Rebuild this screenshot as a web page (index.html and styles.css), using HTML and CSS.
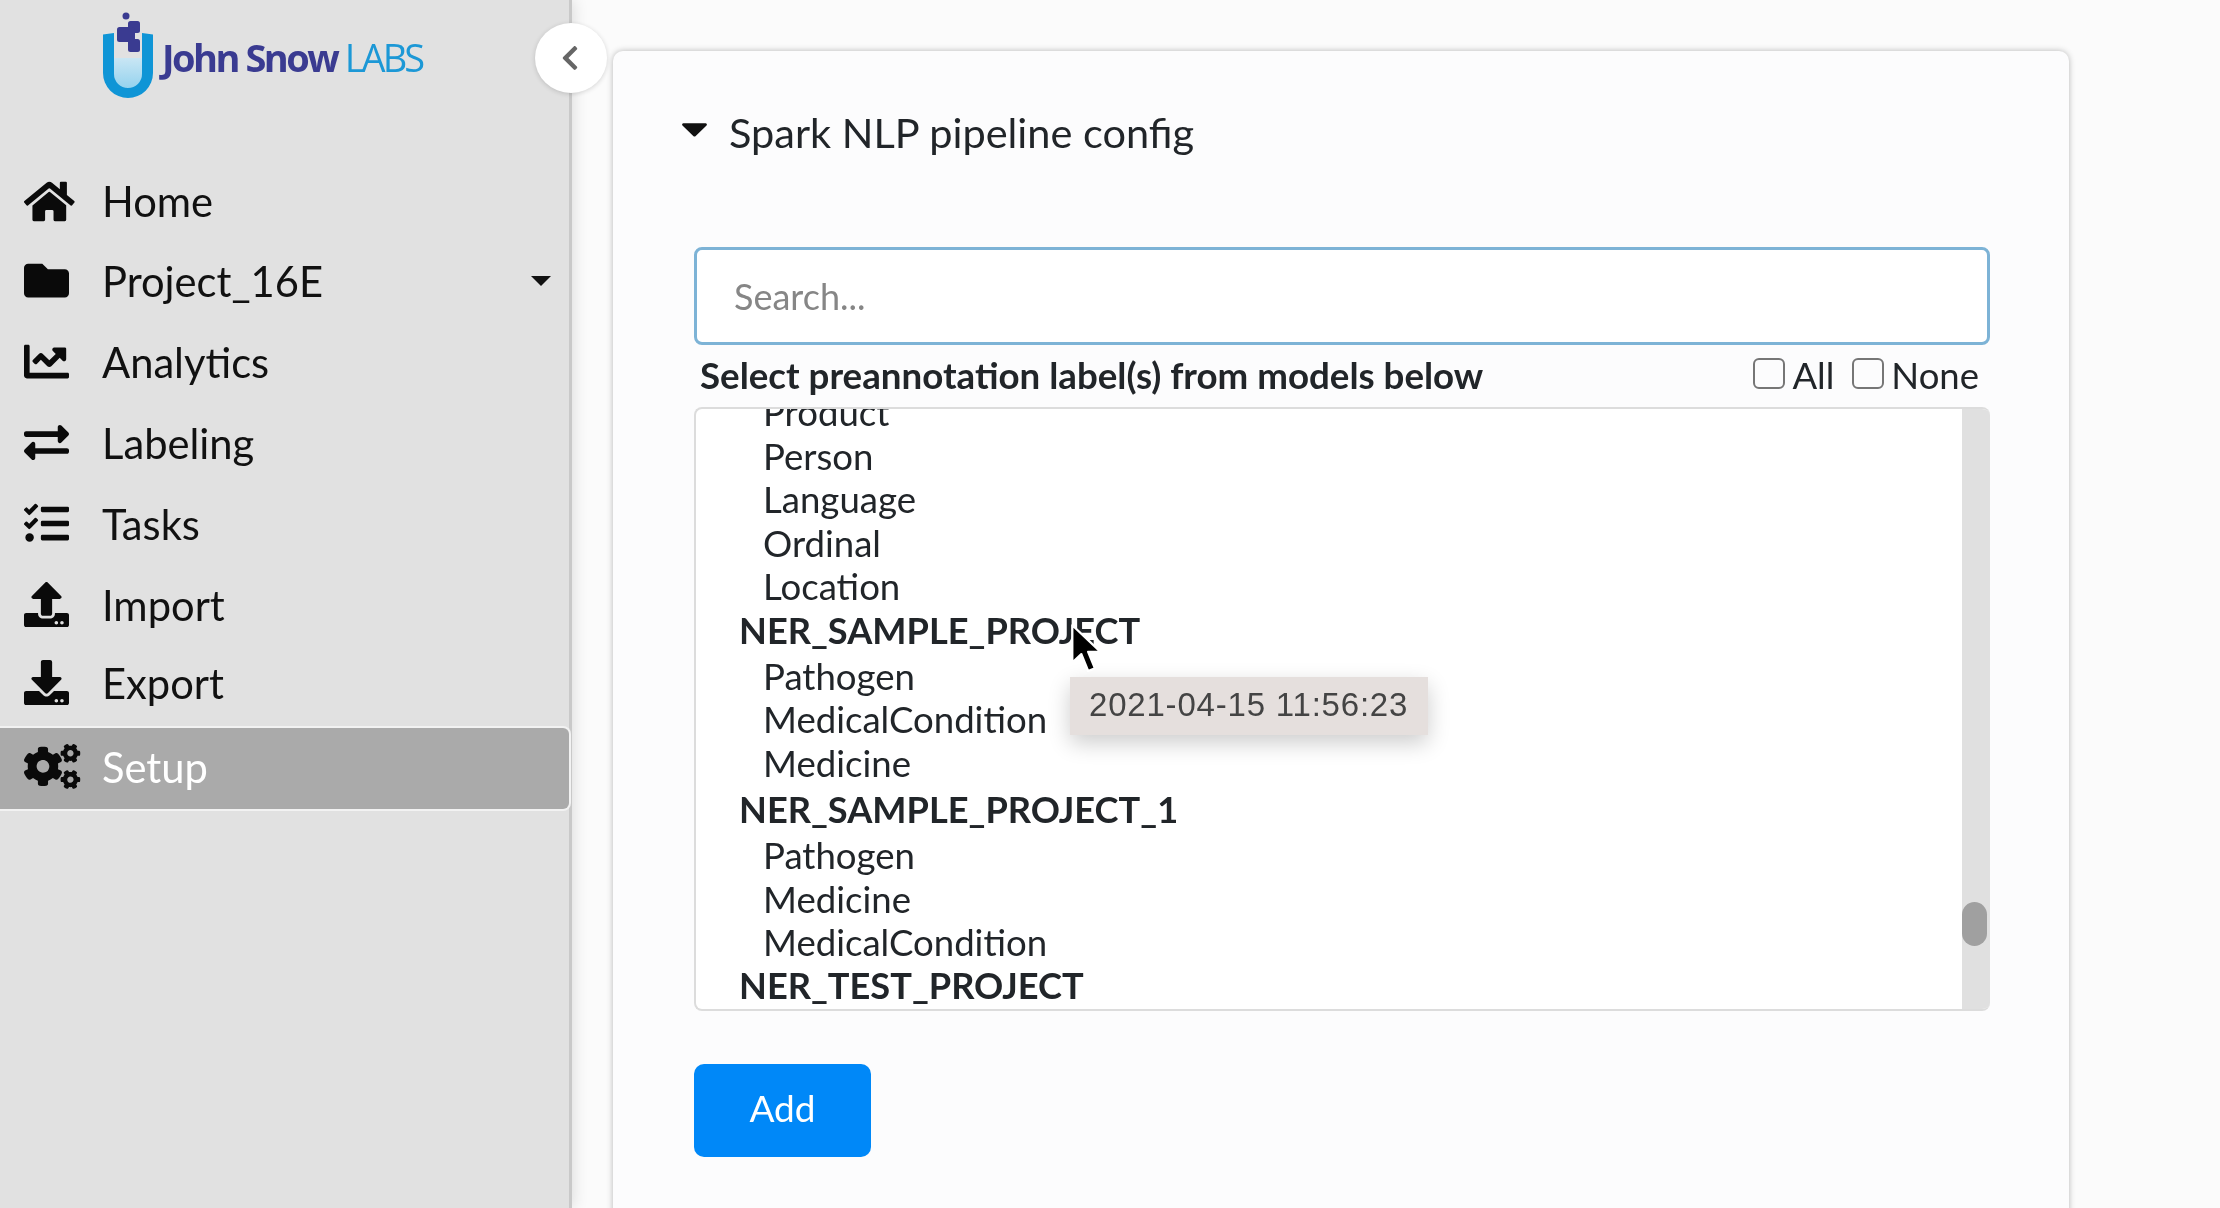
FILE: index.html
```html
<!DOCTYPE html>
<html lang="en">
<head>
<meta charset="utf-8">
<title>Spark NLP pipeline config</title>
<link rel="stylesheet" href="styles.css">
</head>
<body>
<div class="page">
  <aside class="sidebar">
    <div class="logo">
      <svg class="logo-mark" viewBox="0 0 50 86" aria-hidden="true">
        <defs><linearGradient id="liquid" x1="0" y1="0" x2="0" y2="1"><stop offset="0" stop-color="#c9e6f4"/><stop offset="1" stop-color="#93d2ee"/></linearGradient></defs>
        <path d="M11 46h28v17a14 14 0 0 1-28 0z" fill="url(#liquid)"/>
        <path d="M0 22.500l11-1.500v41a14 14 0 0 0 28 0V21l11 1.500V61a25 25 0 0 1-50 0z" fill="#0f95d6"/>
        <circle cx="23" cy="4" r="3.500" fill="#3a3b91"/>
        <rect x="25" y="9" width="12" height="12" rx="2.500" fill="#3a3b91"/>
        <rect x="14" y="15" width="18" height="15" rx="2.500" fill="#3a3b91"/>
        <rect x="25" y="27" width="12" height="13" rx="2.500" fill="#3a3b91"/>
      </svg>
      <span class="logo-text"><b>John Snow</b> <i>LABS</i></span>
    </div>
    <nav class="nav">
      <a class="nav-item nav-item-first"><svg class="icon" viewBox="0 0 576 512" preserveAspectRatio="xMinYMid meet"><path d="M280.37 148.26L96 300.11V464a16 16 0 0 0 16 16l112.06-.29a16 16 0 0 0 15.92-16V368a16 16 0 0 1 16-16h64a16 16 0 0 1 16 16v95.64a16 16 0 0 0 16 16.05L464 480a16 16 0 0 0 16-16V300L295.67 148.26a12.19 12.19 0 0 0-15.3 0zM571.6 251.47L488 182.56V44.05a12 12 0 0 0-12-12h-56a12 12 0 0 0-12 12v72.61L318.47 43a48 48 0 0 0-61 0L4.34 251.47a12 12 0 0 0-1.6 16.9l25.5 31A12 12 0 0 0 45.15 301l235.22-193.74a12.19 12.19 0 0 1 15.3 0L530.9 301a12 12 0 0 0 16.9-1.6l25.5-31a12 12 0 0 0-1.7-16.93z"/></svg><span>Home</span></a>
      <a class="nav-item"><svg class="icon" viewBox="0 0 512 512" preserveAspectRatio="xMinYMid meet"><path d="M464 128H272l-64-64H48C21.49 64 0 85.49 0 112v288c0 26.51 21.49 48 48 48h416c26.51 0 48-21.49 48-48V176c0-26.51-21.49-48-48-48z"/></svg><span>Project_16E</span><svg class="nav-caret" viewBox="0 0 20 10"><path d="M0 0h20L10 10z"/></svg></a>
      <a class="nav-item"><svg class="icon" viewBox="0 0 512 512" preserveAspectRatio="xMinYMid meet"><path d="M496 384H64V80c0-8.840-7.160-16-16-16H16C7.160 64 0 71.160 0 80v336c0 17.670 14.330 32 32 32h464c8.840 0 16-7.160 16-16v-32c0-8.840-7.160-16-16-16zM464 96H345.940c-21.380 0-32.090 25.850-16.970 40.970l32.400 32.400L288 242.750l-73.370-73.370c-12.500-12.500-32.760-12.500-45.250 0l-68.690 68.690c-6.250 6.250-6.250 16.380 0 22.630l22.620 22.620c6.250 6.250 16.380 6.250 22.630 0L192 237.250l73.370 73.370c12.500 12.500 32.760 12.500 45.250 0l96-96 32.400 32.400c15.120 15.120 40.970 4.410 40.970-16.970V112c0-8.840-7.160-16-16-16z"/></svg><span>Analytics</span></a>
      <a class="nav-item"><svg class="icon" viewBox="0 0 512 512" preserveAspectRatio="xMinYMid meet"><path d="M0 168v-16c0-13.255 10.745-24 24-24h360V80c0-21.367 25.899-32.042 40.971-16.971l80 80c9.372 9.373 9.372 24.569 0 33.941l-80 80C409.956 271.982 384 261.456 384 240v-48H24c-13.255 0-24-10.745-24-24zm488 152H128v-48c0-21.314-25.862-32.080-40.971-16.971l-80 80c-9.372 9.373-9.372 24.569 0 33.941l80 80C102.057 463.997 128 453.437 128 432v-48h360c13.255 0 24-10.745 24-24v-16c0-13.255-10.745-24-24-24z"/></svg><span>Labeling</span></a>
      <a class="nav-item"><svg class="icon" viewBox="0 0 512 512" preserveAspectRatio="xMinYMid meet"><path d="M139.610 35.500a12 12 0 0 0-17 0L58.930 98.810l-22.700-22.120a12 12 0 0 0-17 0L3.530 92.410a12 12 0 0 0 0 17l47.590 47.400a12.780 12.780 0 0 0 17.610 0l15.590-15.620L156.520 69a12.090 12.090 0 0 0 .09-17zm0 159.190a12 12 0 0 0-17 0l-63.680 63.720-22.700-22.100a12 12 0 0 0-17 0L3.530 252a12 12 0 0 0 0 17L51 316.500a12.770 12.770 0 0 0 17.600 0l15.700-15.690 72.200-72.220a12 12 0 0 0 .09-16.900zM64 368c-26.490 0-48.590 21.500-48.590 48S37.530 464 64 464a48 48 0 0 0 0-96zm432 16H208a16 16 0 0 0-16 16v32a16 16 0 0 0 16 16h288a16 16 0 0 0 16-16v-32a16 16 0 0 0-16-16zm0-320H208a16 16 0 0 0-16 16v32a16 16 0 0 0 16 16h288a16 16 0 0 0 16-16V80a16 16 0 0 0-16-16zm0 160H208a16 16 0 0 0-16 16v32a16 16 0 0 0 16 16h288a16 16 0 0 0 16-16v-32a16 16 0 0 0-16-16z"/></svg><span>Tasks</span></a>
      <a class="nav-item"><svg class="icon" viewBox="0 0 512 512" preserveAspectRatio="xMinYMid meet"><path d="M296 384h-80c-13.300 0-24-10.700-24-24V192h-87.700c-17.800 0-26.700-21.500-14.100-34.100L242.300 5.700c7.500-7.500 19.800-7.500 27.300 0l152.200 152.200c12.600 12.600 3.700 34.100-14.100 34.100H320v168c0 13.300-10.700 24-24 24zm216-8v112c0 13.300-10.700 24-24 24H24c-13.300 0-24-10.700-24-24V376c0-13.300 10.700-24 24-24h136v8c0 30.900 25.100 56 56 56h80c30.900 0 56-25.100 56-56v-8h136c13.300 0 24 10.700 24 24zm-124 88c0-11-9-20-20-20s-20 9-20 20 9 20 20 20 20-9 20-20zm64 0c0-11-9-20-20-20s-20 9-20 20 9 20 20 20 20-9 20-20z"/></svg><span>Import</span></a>
      <a class="nav-item nav-item-raised"><svg class="icon" viewBox="0 0 512 512" preserveAspectRatio="xMinYMid meet"><path d="M216 0h80c13.300 0 24 10.700 24 24v168h87.700c17.800 0 26.700 21.500 14.100 34.100L269.700 378.300c-7.500 7.500-19.800 7.500-27.300 0L90.100 226.100c-12.600-12.600-3.700-34.100 14.100-34.100H192V24c0-13.300 10.700-24 24-24zm296 376v112c0 13.300-10.700 24-24 24H24c-13.300 0-24-10.700-24-24V376c0-13.300 10.700-24 24-24h146.700l49 49c20.100 20.100 52.500 20.100 72.600 0l49-49H488c13.300 0 24 10.700 24 24zm-124 88c0-11-9-20-20-20s-20 9-20 20 9 20 20 20 20-9 20-20zm64 0c0-11-9-20-20-20s-20 9-20 20 9 20 20 20 20-9 20-20z"/></svg><span>Export</span></a>
      <a class="nav-item nav-item-active"><svg class="icon" viewBox="0 0 640 512" preserveAspectRatio="xMinYMid meet"><path d="M512.100 191l-8.200 14.300c-3 5.300-9.400 7.500-15.100 5.400-11.800-4.400-22.600-10.700-32.100-18.600-4.600-3.800-5.800-10.500-2.800-15.700l8.200-14.300c-6.900-8-12.300-17.300-15.900-27.400h-16.500c-6 0-11.200-4.300-12.200-10.300-2-12-2.100-24.600 0-37.100 1-6 6.200-10.400 12.200-10.400h16.500c3.600-10.100 9-19.400 15.900-27.400l-8.200-14.300c-3-5.200-1.900-11.900 2.800-15.700 9.500-7.900 20.400-14.200 32.100-18.600 5.700-2.100 12.100.1 15.100 5.400l8.200 14.300c10.500-1.900 21.200-1.900 31.700 0L552 6.300c3-5.300 9.400-7.500 15.100-5.400 11.800 4.400 22.600 10.700 32.100 18.600 4.600 3.800 5.800 10.500 2.800 15.700l-8.200 14.300c6.900 8 12.300 17.300 15.900 27.400h16.500c6 0 11.200 4.300 12.200 10.300 2 12 2.100 24.600 0 37.100-1 6-6.200 10.400-12.200 10.400h-16.500c-3.600 10.100-9 19.400-15.900 27.400l8.200 14.300c3 5.200 1.900 11.900-2.800 15.700-9.500 7.900-20.400 14.200-32.100 18.600-5.700 2.100-12.100-.1-15.100-5.400l-8.200-14.300c-10.400 1.900-21.200 1.900-31.700 0zm-10.500-58.800c38.500 29.600 82.400-14.300 52.800-52.800-38.500-29.700-82.400 14.300-52.800 52.800zM386.300 286.100l33.700 16.800c10.100 5.800 14.500 18.100 10.500 29.100-8.900 24.200-26.400 46.400-42.600 65.800-7.400 8.900-20.200 11.100-30.300 5.300l-29.100-16.800c-16 13.700-34.600 24.600-54.900 31.700v33.600c0 11.600-8.300 21.600-19.700 23.600-24.600 4.200-50.400 4.400-75.900 0-11.500-2-20-11.900-20-23.600V418c-20.300-7.200-38.900-18-54.900-31.700L74 403c-10 5.800-22.900 3.600-30.300-5.300-16.200-19.400-33.300-41.600-42.200-65.700-4-10.900.4-23.200 10.500-29.100l33.300-16.800c-3.900-20.900-3.900-42.400 0-63.400L12 205.800c-10.100-5.800-14.600-18.100-10.500-29 8.900-24.200 26-46.400 42.200-65.800 7.400-8.900 20.200-11.100 30.300-5.300l29.100 16.800c16-13.700 34.600-24.600 54.900-31.700V57.100c0-11.500 8.200-21.500 19.600-23.500 24.600-4.200 50.500-4.400 76-.1 11.500 2 20 11.900 20 23.600v33.600c20.300 7.200 38.900 18 54.900 31.700l29.100-16.800c10-5.800 22.900-3.600 30.300 5.300 16.200 19.400 33.200 41.600 42.100 65.800 4 10.900.1 23.200-10 29.100l-33.700 16.800c3.900 21 3.900 42.500 0 63.500zm-117.600 21.100c59.200-77-28.700-164.900-105.700-105.700-59.200 77 28.700 164.900 105.700 105.700zm243.400 182.700l-8.200 14.300c-3 5.300-9.400 7.500-15.100 5.400-11.800-4.400-22.600-10.700-32.100-18.600-4.600-3.800-5.800-10.500-2.800-15.700l8.200-14.300c-6.900-8-12.300-17.300-15.900-27.400h-16.500c-6 0-11.200-4.300-12.200-10.300-2-12-2.100-24.600 0-37.100 1-6 6.200-10.400 12.200-10.400h16.500c3.600-10.100 9-19.400 15.900-27.400l-8.200-14.300c-3-5.200-1.900-11.900 2.800-15.700 9.500-7.900 20.400-14.200 32.100-18.600 5.700-2.100 12.100.1 15.100 5.400l8.200 14.300c10.500-1.900 21.200-1.900 31.700 0l8.200-14.300c3-5.300 9.400-7.500 15.100-5.400 11.800 4.400 22.600 10.700 32.100 18.600 4.600 3.800 5.800 10.500 2.800 15.700l-8.200 14.300c6.900 8 12.300 17.300 15.900 27.400h16.500c6 0 11.200 4.300 12.200 10.300 2 12 2.100 24.600 0 37.100-1 6-6.200 10.400-12.200 10.400h-16.500c-3.600 10.100-9 19.400-15.900 27.400l8.200 14.300c3 5.200 1.900 11.900-2.800 15.700-9.500 7.900-20.400 14.200-32.100 18.600-5.700 2.100-12.100-.1-15.100-5.400l-8.200-14.300c-10.400 1.900-21.200 1.900-31.700 0zM501.600 431c38.500 29.600 82.400-14.300 52.800-52.800-38.500-29.600-82.400 14.300-52.800 52.800z"/></svg><span>Setup</span></a>
    </nav>
  </aside>
  <button class="collapse" type="button" aria-label="Collapse sidebar"><svg viewBox="0 0 320 512"><path d="M34.520 239.030L228.870 44.690c9.370-9.370 24.570-9.370 33.940 0l22.670 22.670c9.360 9.360 9.370 24.520.04 33.900L131.490 256l154.020 154.750c9.340 9.380 9.320 24.540-.04 33.900l-22.670 22.670c-9.370 9.370-24.570 9.370-33.940 0L34.520 272.970c-9.370-9.370-9.370-24.570 0-33.940z"/></svg></button>
  <main class="main">
    <section class="card">
      <h2 class="card-title"><svg class="title-caret" viewBox="0 0 26 14"><path d="M1.500 0h23a1.300 1.300 0 0 1 1 2.200L14 13.400a1.500 1.500 0 0 1-2 0L.5 2.200A1.300 1.300 0 0 1 1.500 0z"/></svg>Spark NLP pipeline config</h2>
      <div class="form">
        <input class="search" type="text" placeholder="Search...">
        <div class="select-row">
          <strong class="select-label">Select preannotation label(s) from models below</strong>
          <div class="checks">
            <label class="check"><input type="checkbox">All</label>
            <label class="check"><input type="checkbox">None</label>
          </div>
        </div>
        <div class="list">
          <div class="list-scroll">
            <div class="list-content">
              <div class="item">Product</div>
              <div class="item">Person</div>
              <div class="item">Language</div>
              <div class="item">Ordinal</div>
              <div class="item">Location</div>
              <div class="group">NER_SAMPLE_PROJECT</div>
              <div class="item">Pathogen</div>
              <div class="item">MedicalCondition</div>
              <div class="item">Medicine</div>
              <div class="group group-spaced">NER_SAMPLE_PROJECT_1</div>
              <div class="item">Pathogen</div>
              <div class="item">Medicine</div>
              <div class="item">MedicalCondition</div>
              <div class="group group-tight">NER_TEST_PROJECT</div>
            </div>
          </div>
          <div class="scrollbar"><div class="thumb"></div></div>
        </div>
        <button class="add" type="button">Add</button>
      </div>
    </section>
  </main>
  <div class="tooltip">2021-04-15 11:56:23</div>
  <svg class="cursor" viewBox="0 0 30 46" aria-hidden="true"><path d="M2 2v33l8-7.500 6 15 6-2.500-6-14.500h11z" fill="#000" stroke="#fff" stroke-width="2" stroke-linejoin="round"/></svg>
</div>
</body>
</html>
```

FILE: styles.css
```css
* { box-sizing: border-box; }
html, body { margin: 0; height: 100%; }
body {
  font-family: Lato, "Open Sans", sans-serif;
  color: #212529;
  background: #fbfbfb;
  overflow: hidden;
}
.page {
  position: relative;
  display: flex;
  width: 2220px;
  height: 1208px;
  overflow: hidden;
  filter: blur(.45px);
}
.sidebar {
  flex: 0 0 572px;
  height: 100%;
  background: #e1e1e1;
  border-right: 3px solid #c9c9c9;
  box-shadow: 2px 0 14px rgba(0, 0, 0, .12);
  z-index: 1;
}
.logo {
  height: 159px;
  padding: 12px 0 0 103px;
  display: flex;
  align-items: flex-start;
  filter: blur(.5px);
}
.logo-mark { width: 50px; height: 86px; flex: none; }
.logo-text {
  margin: 22px 0 0 9px;
  font-family: "Open Sans", sans-serif;
  font-size: 38px;
  line-height: 46px;
  letter-spacing: -2.500px;
  white-space: nowrap;
}
.logo-text b { font-weight: 700; color: #3a3b91; }
.logo-text i { font-style: normal; font-weight: 400; color: #1c98d6; letter-spacing: -3px; }
.nav { display: flex; flex-direction: column; }
.nav-item {
  display: flex;
  align-items: center;
  height: 81px;
  padding: 0 18px 0 24px;
  font-size: 41.700px;
  color: #111;
}
.nav-item-first { padding-top: 3px; }
.nav-item-raised { height: 83px; padding-bottom: 8px; }
.nav-item-active {
  padding-bottom: 4px;
  background: #aaa;
  color: #fff;
  border-radius: 0 6px 6px 0;
  box-shadow: 0 0 0 2px #f2f2f2;
}
.icon { width: 78px; height: 45px; flex: none; fill: #0a0a0a; }
.nav-caret { width: 20px; height: 10px; margin-left: auto; fill: #111; }
.collapse {
  position: absolute;
  left: 535px;
  top: 23px;
  z-index: 2;
  width: 72px;
  height: 70px;
  padding: 0 3px 0 0;
  display: flex;
  align-items: center;
  justify-content: center;
  border: 0;
  border-radius: 50%;
  background: #fff;
  box-shadow: 0 1px 5px rgba(0, 0, 0, .16);
}
.collapse svg { width: 20px; height: 28px; fill: #666; }
.main { flex: 1; min-width: 0; padding: 51px 0 0 41px; }
.card {
  width: 1456px;
  height: 1300px;
  background: #fcfcfd;
  border-radius: 10px;
  box-shadow: 0 0 6px rgba(0, 0, 0, .28);
  padding: 53px 79px 0 81px;
}
.card-title {
  display: flex;
  align-items: center;
  margin: 0 0 0 -12px;
  height: 56px;
  font-size: 41.500px;
  font-weight: 400;
  color: #212529;
}
.title-caret { width: 25px; height: 14px; margin: -4px 22px 0 0; fill: #111; flex: none; }
.form { margin-top: 87px; }
.search {
  display: block;
  width: 100%;
  height: 98px;
  padding: 0 37px;
  font: 36px Lato, sans-serif;
  background: #fff;
  border: 3px solid #7db3d6;
  border-radius: 8px;
  outline: 0;
}
.search::placeholder { color: #868686; opacity: 1; }
.select-row {
  display: flex;
  justify-content: space-between;
  align-items: center;
  height: 62px;
  padding: 0 11px 3px 6px;
  font-size: 36.500px;
}
.select-label { font-weight: 700; font-size: 36.700px; }
.checks { display: flex; gap: 18px; }
.check { display: flex; align-items: center; gap: 7px; }
.check input {
  appearance: none;
  width: 32px;
  height: 31px;
  margin: -3px 0 0;
  background: transparent;
  border: 2px solid #767676;
  border-radius: 6px;
}
.list {
  display: flex;
  height: 604px;
  background: #fff;
  border-radius: 8px;
  border: 2px solid #dcdcdc;
  border-right: 0;
  overflow: hidden;
}
.list-scroll { flex: 1; min-width: 0; overflow: hidden; }
.list-content { margin-top: -18px; font-size: 36.600px; }
.item { height: 43.500px; line-height: 43.500px; padding-left: 67px; }
.group {
  height: 46px;
  line-height: 43.500px;
  padding-left: 43px;
  font-size: 36.200px;
  font-weight: 700;
}
.group-spaced { margin-top: 3px; }
.group-tight { margin-top: -1px; }
.scrollbar { position: relative; flex: 0 0 28px; background: #e0e0e0; }
.thumb {
  position: absolute;
  top: 493px;
  left: 0;
  width: 25px;
  height: 44px;
  background: #a0a0a0;
  border-radius: 13px;
}
.add {
  display: block;
  width: 177px;
  height: 93px;
  margin-top: 53px;
  padding: 0 0 6px;
  font: 37px Lato, sans-serif;
  color: #fff;
  background: #0088f8;
  border: 0;
  border-radius: 10px;
}
.tooltip {
  position: absolute;
  left: 1070px;
  top: 677px;
  z-index: 3;
  width: 358px;
  height: 58px;
  padding-left: 19px;
  font-family: "Liberation Sans", Arial, sans-serif;
  font-size: 33px;
  line-height: 56px;
  letter-spacing: .800px;
  white-space: nowrap;
  color: #444;
  background: #e5dfdd;
  box-shadow: 0 8px 22px rgba(0, 0, 0, .2);
}
.cursor {
  position: absolute;
  left: 1070px;
  top: 623px;
  z-index: 4;
  width: 34px;
  height: 52px;
}
```
